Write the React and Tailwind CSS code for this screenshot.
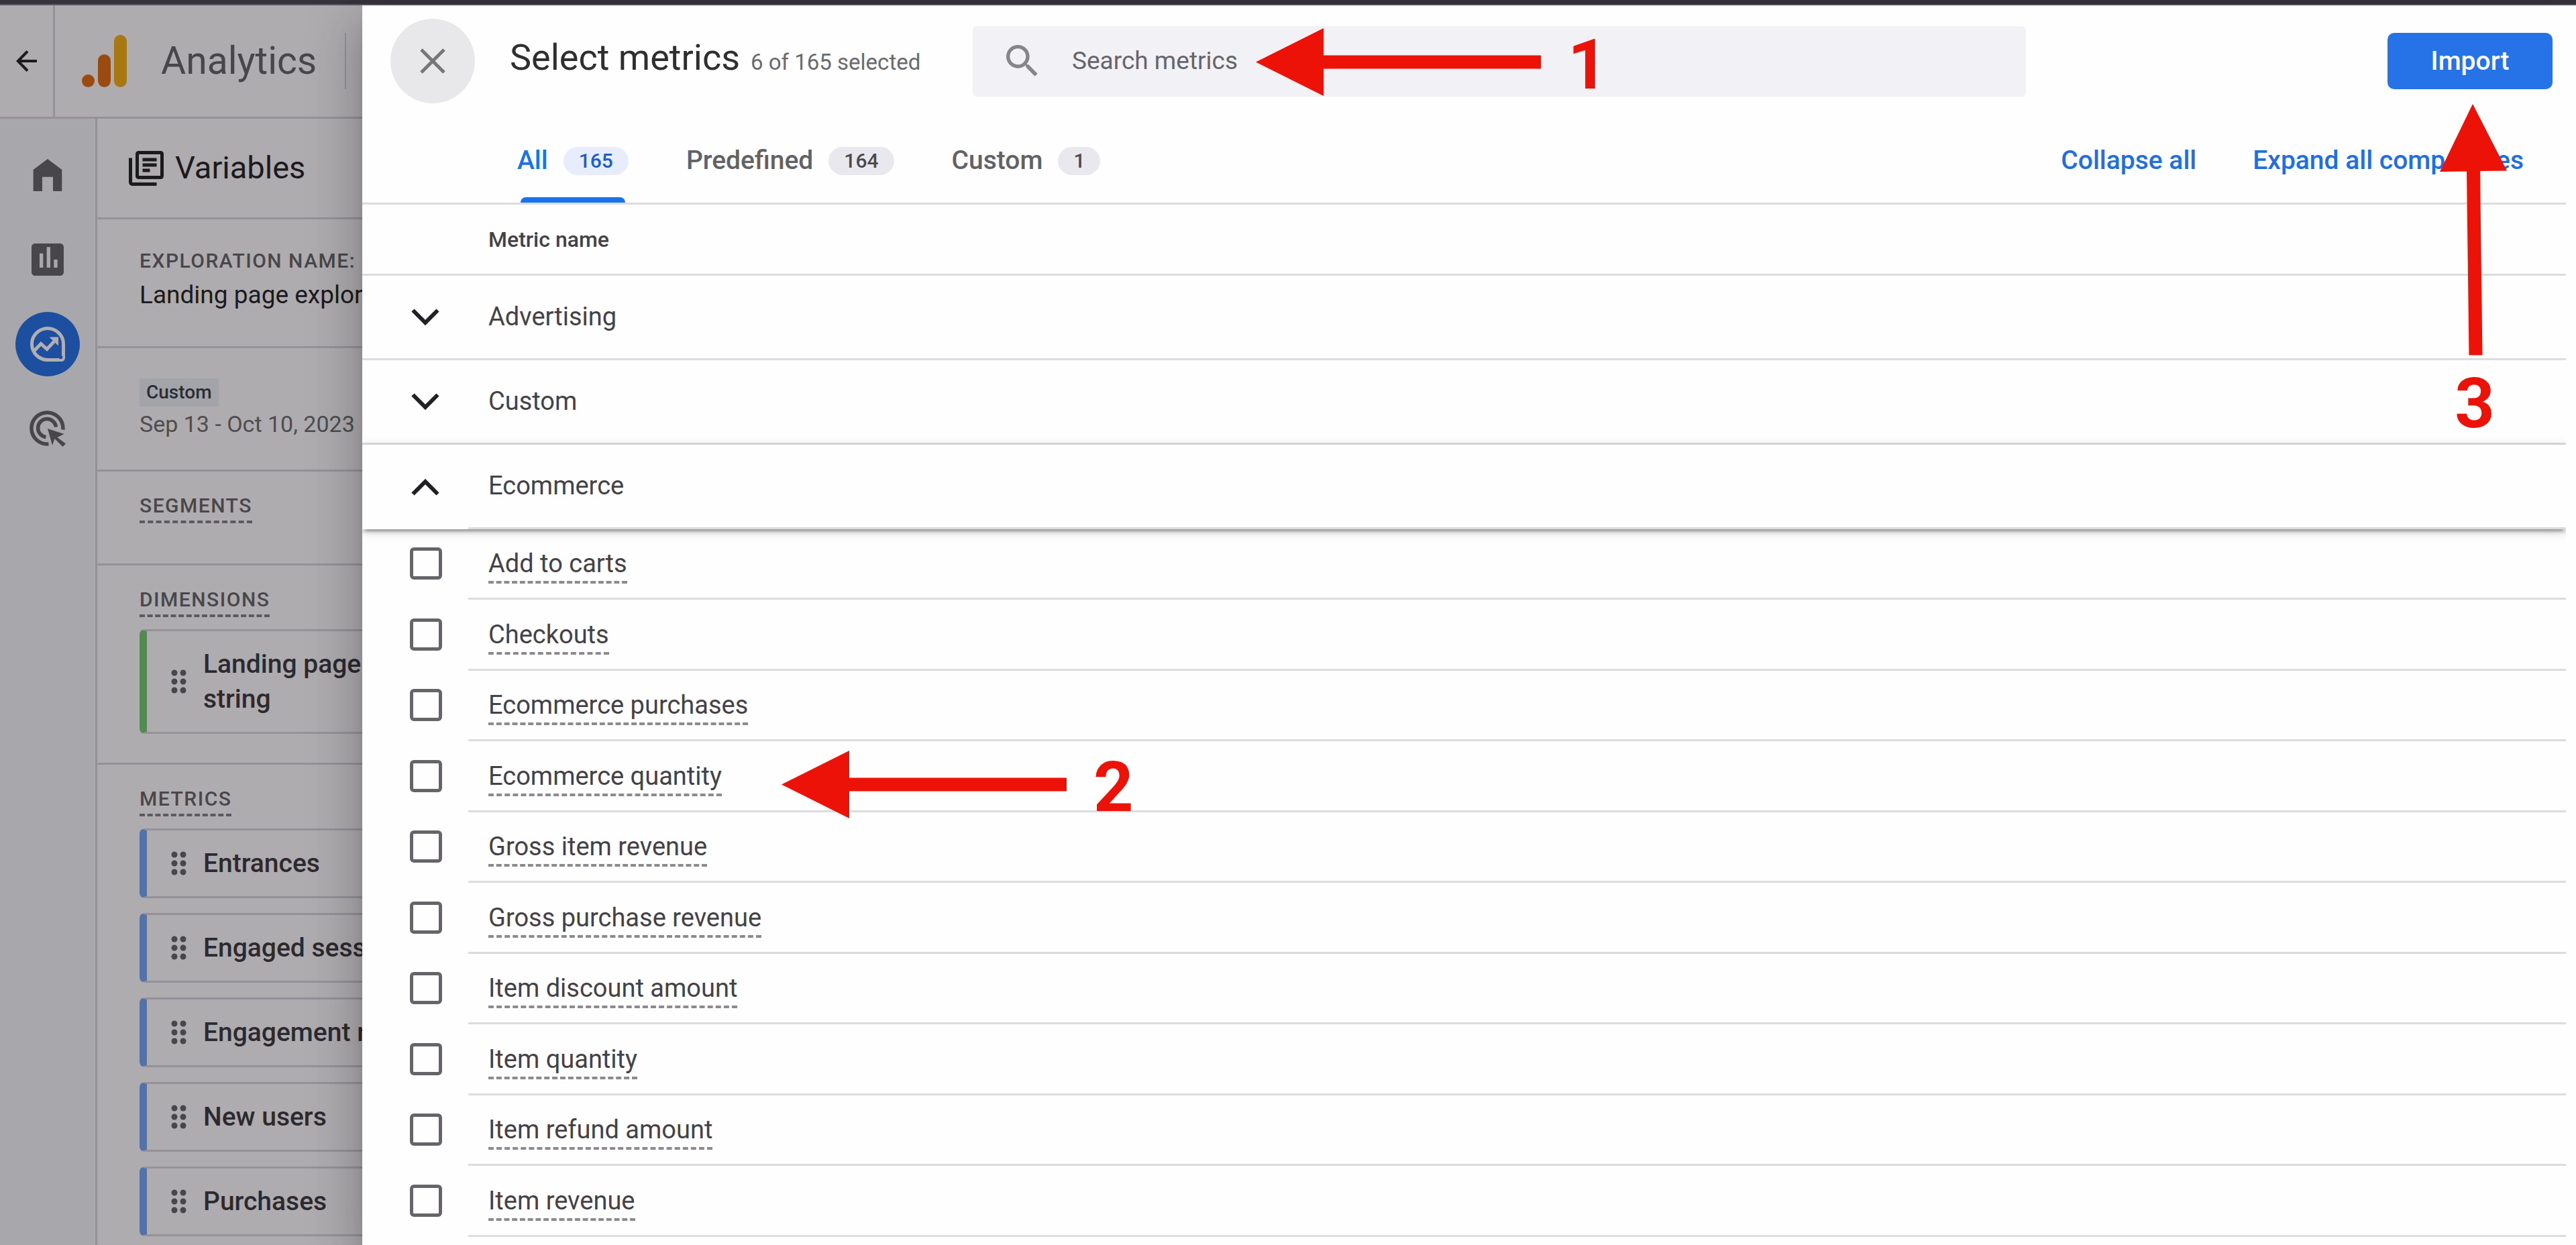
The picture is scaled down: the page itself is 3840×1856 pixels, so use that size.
import { useState } from 'react';

const metrics = [
  'Add to carts',
  'Checkouts',
  'Ecommerce purchases',
  'Ecommerce quantity',
  'Gross item revenue',
  'Gross purchase revenue',
  'Item discount amount',
  'Item quantity',
  'Item refund amount',
  'Item revenue',
];

const groups = [
  { name: 'Advertising', items: [] },
  { name: 'Custom', items: [] },
  { name: 'Ecommerce', items: metrics },
];

const tabs = [
  { name: 'All', count: 165 },
  { name: 'Predefined', count: 164 },
  { name: 'Custom', count: 1 },
];

const selectedMetrics = ['Entrances', 'Engaged sessions', 'Engagement rate', 'New users', 'Purchases'];

const Chevron = ({ open }) => (
  <svg viewBox="0 0 42 26" className="w-[42px] h-[26px]" fill="none" stroke="#202124" strokeWidth="6">
    <path d={open ? 'M2.5 23.5 21 5l18.5 18.5' : 'M2.5 2.5 21 21 39.5 2.5'} />
  </svg>
);

const AnalyticsLogo = () => (
  <svg viewBox="0 0 68 78" className="w-[68px] h-[78px]">
    <circle cx="9.5" cy="68.5" r="9.5" fill="#9b4b10" />
    <rect x="24" y="29" width="19" height="49" rx="9.5" fill="#9b4b10" />
    <rect x="48" y="0" width="19" height="78" rx="9.5" fill="#a87811" />
  </svg>
);

const DragHandle = () => (
  <svg viewBox="0 0 24 36" className="w-6 h-9 shrink-0" fill="#48464a">
    <circle cx="5" cy="5" r="4.5" />
    <circle cx="18" cy="5" r="4.5" />
    <circle cx="5" cy="18" r="4.5" />
    <circle cx="18" cy="18" r="4.5" />
    <circle cx="5" cy="31" r="4.5" />
    <circle cx="18" cy="31" r="4.5" />
  </svg>
);

const VariableCard = ({ name, color }) => (
  <li className={`flex items-center w-[480px] border-y-[3px] border-y-[#949298] border-l-[11px] rounded-l-lg pl-9 py-[23px] ${color}`}>
    <DragHandle />
    <span className="ml-6 w-64 text-[39px] leading-[52px] font-medium text-[#2c2a2e]">{name}</span>
  </li>
);

const SectionLabel = ({ children }) => (
  <h3 className="inline-block border-b-4 border-dashed border-[#5c5a5e] text-[30px] leading-[36px] pb-1 font-medium tracking-wider text-[#48474a]">
    {children}
  </h3>
);

const NavRail = () => (
  <nav className="flex flex-col items-center w-[145px] shrink-0 border-r-[3px] border-[#949298] bg-[#a8a7ac] pt-[21px]">
    <button type="button" aria-label="Home" className="flex items-center justify-center h-[126px] w-full">
      <svg viewBox="0 0 24 24" className="size-16" fill="#48464a">
        <path d="M4 21V9l8-6 8 6v12h-5v-8H9v8z" />
      </svg>
    </button>
    <button type="button" aria-label="Reports" className="flex items-center justify-center h-[126px] w-full">
      <svg viewBox="0 0 24 24" className="size-16" fill="#48464a">
        <path d="M19 3H5c-1.100 0-2 .9-2 2v14c0 1.100.9 2 2 2h14c1.100 0 2-.9 2-2V5c0-1.100-.9-2-2-2zM9.500 16.500h-2v-8h2v8zm4 0h-2v-11.500h2v11.500zm4 0h-2v-4.500h2v4.500z" />
      </svg>
    </button>
    <button type="button" aria-label="Explore" className="flex items-center justify-center h-[126px] w-full">
      <span className="flex items-center justify-center size-24 rounded-full bg-[#1c4fa0]">
        <svg viewBox="0 0 52 52" className="size-[52px]" fill="none" stroke="#b0aeb2" strokeWidth="5">
          <path d="M26 2.500a23.500 23.500 0 1 0 0 47h20.500a3 3 0 0 0 3-3V26A23.500 23.500 0 0 0 26 2.500z" />
          <path d="M49.500 34v15.500H34c8 0 15.500-7 15.500-15.500z" fill="#b0aeb2" stroke="none" />
          <path d="m6 36 10-10.500 9 8L38.500 19" />
          <path d="M28.500 15.500h13.500v13z" fill="#b0aeb2" stroke="none" />
          <circle cx="45.500" cy="45.500" r="2.800" fill="#1c4fa0" stroke="none" />
        </svg>
      </span>
    </button>
    <button type="button" aria-label="Advertising" className="flex items-center justify-center h-[126px] w-full">
      <svg viewBox="0 0 54 54" className="size-[54px]" fill="none" stroke="#48464a" strokeWidth="5.500">
        <path d="M28.500 49.800A23.500 23.500 0 1 1 49.800 28.500" />
        <path d="M24.500 39.500A13.500 13.500 0 1 1 39.500 24.500" />
        <path d="m27 27 24.500 8-10 5 12.500 9.500-4.500 4.500-12-12-3.500 10z" fill="#48464a" stroke="none" />
      </svg>
    </button>
  </nav>
);

const Sidebar = () => (
  <aside className="flex flex-col w-[540px] shrink-0 overflow-hidden bg-[#aeacaf]">
    <header className="flex shrink-0 h-[169px] border-b-[3px] border-[#949298]">
      <button
        type="button"
        aria-label="Back"
        className="flex items-center justify-center w-[82px] border-r-[3px] border-[#949298]"
      >
        <svg viewBox="0 0 32 32" className="size-8" fill="none" stroke="#1b1a1d" strokeWidth="4">
          <path d="M31 16H3M17 1.500 2.800 16 17 30.500" />
        </svg>
      </button>
      <div className="flex items-center pl-10">
        <AnalyticsLogo />
        <span className="ml-[50px] text-[57px] text-[#48464a]">Analytics</span>
        <span className="ml-[42px] h-[84px] w-[2px] bg-[#949298]" />
      </div>
    </header>

    <div className="flex flex-1 min-h-0">
      <NavRail />
      <div className="flex-1 min-w-0 whitespace-nowrap divide-y-[3px] divide-[#949298]">
        <div className="flex items-center h-[150px] pl-[46px]">
          <svg viewBox="0 0 54 54" className="size-[54px]" fill="none" stroke="#1b1a1d" strokeWidth="5">
            <rect x="13.500" y="3.500" width="37" height="37" rx="2" />
            <path d="M3.500 11.500v36a3 3 0 0 0 3 3h36M21.500 14h21M21.500 22h21M21.500 30h11" />
          </svg>
          <h2 className="ml-4 text-[47px] text-[#1b1a1d]">Variables</h2>
        </div>

        <div className="h-[192px] pl-[63px] pt-[41px]">
          <p className="text-[30px] leading-[42px] font-medium tracking-wider text-[#48474a]">EXPLORATION NAME:</p>
          <p className="mt-1 text-[37px] leading-[52px] text-[#1b1a1d]">Landing page exploration</p>
        </div>

        <div className="h-[184px] pl-[63px] pt-[45px]">
          <span className="inline-block rounded-xs bg-[#a3a4aa] px-[10px] text-[28px] leading-[42px] font-medium text-[#2c2c34]">
            Custom
          </span>
          <p className="text-[34px] leading-[52px] text-[#4e4d50]">Sep 13 - Oct 10, 2023</p>
        </div>

        <div className="h-[140px] pl-[63px] pt-[33px]">
          <SectionLabel>SEGMENTS</SectionLabel>
        </div>

        <div className="h-[297px] pl-[63px] pt-[33px] whitespace-normal">
          <SectionLabel>DIMENSIONS</SectionLabel>
          <ul className="mt-[18px]">
            <VariableCard name="Landing page string" color="border-l-[#538a54]" />
          </ul>
        </div>

        <div className="pl-[63px] pt-[33px]">
          <SectionLabel>METRICS</SectionLabel>
          <ul className="mt-[18px] flex flex-col gap-[22px]">
            {selectedMetrics.map((name) => (
              <VariableCard key={name} name={name} color="border-l-[#5572a8]" />
            ))}
          </ul>
        </div>
      </div>
    </div>
  </aside>
);

const MetricRow = ({ name, checked, onToggle }) => {
  const id = name.toLowerCase().replaceAll(' ', '-');
  return (
    <tr className="h-[105px] even:h-[106px]">
      <td className="pb-[3px] pl-[71px]">
        <input
          type="checkbox"
          id={id}
          checked={checked}
          onChange={onToggle}
          className="block appearance-none size-12 rounded-md border-[5px] border-[#666468] checked:bg-[#1a73e8]"
        />
      </td>
      <td className="border-b-[3px] border-[#dddbe0] pl-[30px]">
        <label
          htmlFor={id}
          className="inline-block align-middle border-b-4 border-dashed border-[#8c8a8e] pt-[6px] pb-[2px] text-[38px] leading-[48px] text-[#444246]"
        >
          {name}
        </label>
      </td>
    </tr>
  );
};

const MetricsTable = () => {
  const [openGroup, setOpenGroup] = useState('Ecommerce');
  const [checked, setChecked] = useState([]);

  // Toggle a single metric
  const toggleMetric = (name) => {
    setChecked((prev) => (prev.includes(name) ? prev.filter((n) => n !== name) : [...prev, name]));
  };

  return (
    <div className="flex-1 min-h-0 overflow-hidden">
      <table className="w-full table-fixed border-separate border-spacing-0 text-left">
        <colgroup>
          <col className="w-[158px]" />
          <col />
        </colgroup>
        <thead>
          <tr className="h-[106px]">
            <th className="border-b-[3px] border-[#dddbe0]" />
            <th className="border-b-[3px] border-[#dddbe0] pl-[30px] text-[32px] font-medium text-[#444246]">
              Metric name
            </th>
          </tr>
        </thead>
        {groups.map((group) => {
          const open = openGroup === group.name;
          return [
            <tbody key={group.name}>
              <tr
                className={`h-[126px] ${
                  open
                    ? 'relative shadow-[0_8px_3px_-5px_rgba(0,0,0,0.2),0_5px_5px_rgba(0,0,0,0.14),0_3px_16px_rgba(0,0,0,0.16)]'
                    : ''
                }`}
              >
                <td className={`pl-[73px] ${open ? '' : 'border-b-[3px] border-[#dddbe0]'}`}>
                  <button
                    type="button"
                    aria-label={group.name}
                    aria-expanded={open}
                    onClick={() => setOpenGroup(open ? null : group.name)}
                    className="block"
                  >
                    <Chevron open={open} />
                  </button>
                </td>
                <td className="border-b-[3px] border-[#dddbe0] pl-[30px] text-[38px] text-[#444246]">{group.name}</td>
              </tr>
            </tbody>,
            open && (
              <tbody key={`${group.name}-items`}>
                {group.items.map((name) => (
                  <MetricRow
                    key={name}
                    name={name}
                    checked={checked.includes(name)}
                    onToggle={() => toggleMetric(name)}
                  />
                ))}
              </tbody>
            ),
          ];
        })}
      </table>
    </div>
  );
};

const Drawer = () => {
  const [activeTab, setActiveTab] = useState('All');

  return (
    <main className="relative z-10 flex flex-1 min-w-0 flex-col bg-[#fefefe] pr-[15px] shadow-[0_21px_26px_-13px_rgba(0,0,0,0.2),0_42px_63px_5px_rgba(0,0,0,0.14),0_16px_79px_13px_rgba(0,0,0,0.12)]">
      <header className="flex items-center h-[166px] pl-[42px] pr-5">
        <button
          type="button"
          aria-label="Close"
          className="flex items-center justify-center size-[126px] shrink-0 rounded-full bg-[#e8e7e9]"
        >
          <svg viewBox="0 0 38 38" className="size-[38px]" fill="none" stroke="#77777a" strokeWidth="5">
            <path d="m2 2 34 34M36 2 2 36" />
          </svg>
        </button>
        <div className="ml-[52px] flex w-[690px] items-baseline gap-4 pb-[10px] whitespace-nowrap">
          <h1 className="text-[54px] leading-[72px] text-[#2f2e31]">Select metrics</h1>
          <span className="text-[33px] text-[#6b6a6e]">6 of 165 selected</span>
        </div>
        <label className="flex h-[105px] w-[1570px] items-center rounded-md bg-[#f2f1f6] pl-[42px]">
          <svg viewBox="0 0 24 24" className="size-16 shrink-0" fill="#86868a">
            <path d="M15.500 14h-.79l-.28-.27A6.471 6.471 0 0 0 16 9.500 6.500 6.500 0 1 0 9.500 16c1.610 0 3.090-.59 4.230-1.570l.27.28v.79l5 4.990L20.490 19l-4.990-5zm-6 0C7.010 14 5 11.990 5 9.500S7.010 5 9.500 5 14 7.010 14 9.500 11.990 14 9.500 14z" />
          </svg>
          <input
            type="text"
            aria-label="Search metrics"
            placeholder="Search metrics"
            className="ml-[42px] flex-1 bg-transparent text-[37px] text-[#444246] outline-none placeholder:text-[#66656a]"
          />
        </label>
        <button
          type="button"
          className="ml-auto h-[84px] w-[246px] rounded-[10px] bg-[#2673e7] text-[39px] font-medium text-white"
        >
          Import
        </button>
      </header>

      <div className="flex h-[131px] items-stretch border-b-[3px] border-[#dddbdd] pl-[231px] pr-[63px] text-[39px] font-medium">
        <div role="tablist" className="flex gap-[86px]">
          {tabs.map((tab) => {
            const active = tab.name === activeTab;
            return (
              <button
                key={tab.name}
                type="button"
                role="tab"
                aria-selected={active}
                onClick={() => setActiveTab(tab.name)}
                className={`relative flex items-center gap-[23px] pt-[3px] ${active ? 'text-[#1a73e8]' : 'text-[#626166]'}`}
              >
                {tab.name}
                <span
                  className={`flex h-[42px] items-center rounded-full px-[23px] text-[30px] ${
                    active ? 'bg-[#e8edfd] text-[#1b5fca]' : 'bg-[#e9e8ee] text-[#4b4a4f]'
                  }`}
                >
                  {tab.count}
                </span>
                {active && <span className="absolute inset-x-[5px] bottom-0 h-2 rounded-t-lg bg-[#1a73e8]" />}
              </button>
            );
          })}
        </div>
        <div className="ml-auto flex items-center gap-[84px] pt-[3px] text-[#1f6fe0]">
          <button type="button">Collapse all</button>
          <button type="button">Expand all compatibles</button>
        </div>
      </div>

      <MetricsTable />
    </main>
  );
};

// Numbered steps drawn over the page
const Annotations = () => (
  <div className="pointer-events-none absolute inset-0 z-20 text-[104px] leading-[104px] font-bold text-[#ed1208]">
    <div className="absolute left-[1872px] top-[35px] flex items-center gap-10">
      <svg viewBox="0 0 425 101" className="h-[101px] w-[425px]" fill="currentColor">
        <path d="M0 50.500 101 0v40.500h324v20H101V101z" />
      </svg>
      <span className="pt-[10px]">1</span>
    </div>
    <div className="absolute left-[1165px] top-[1112px] flex items-center gap-10">
      <svg viewBox="0 0 425 101" className="h-[101px] w-[425px]" fill="currentColor">
        <path d="M0 50.500 101 0v40.500h324v20H101V101z" />
      </svg>
      <span className="pt-[10px]">2</span>
    </div>
    <div className="absolute right-[103px] top-[155px] flex w-[100px] flex-col items-center gap-5">
      <svg viewBox="0 0 100 375" className="h-[375px] w-[100px]" fill="currentColor">
        <path d="M49 0 100 99.500l-40 .5 3.500 274.500h-20L40 100.500 0 101z" />
      </svg>
      <span className="pl-1">3</span>
    </div>
  </div>
);

const App = () => (
  <div className="relative flex h-screen flex-col overflow-hidden font-['Roboto','Liberation_Sans',sans-serif]">
    <div className="h-2 shrink-0 border-b-2 border-[#5c5864] bg-[#37333c]" />
    <div className="flex flex-1 min-h-0">
      <Sidebar />
      <Drawer />
    </div>
    <Annotations />
  </div>
);

export default App;
